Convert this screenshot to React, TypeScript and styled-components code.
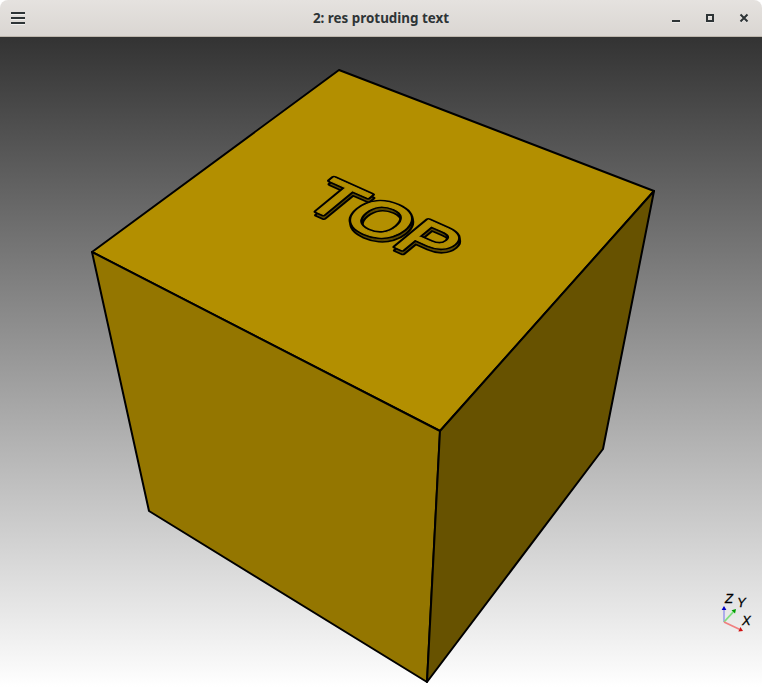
import React from 'react'

import styled, { createGlobalStyle } from 'styled-components'

const GlobalStyle = createGlobalStyle`
  html, body, #root {
    margin: 0;
    height: 100%;
    background: #ffffff;
  }
`

const Window = styled.div`
  width: 100%;
  height: 100vh;
  display: flex;
  flex-direction: column;
  overflow: hidden;
`

const TitleBar = styled.header`
  flex-shrink: 0;
  height: 36px;
  display: grid;
  grid-template-columns: 1fr auto 1fr;
  align-items: center;
  padding: 0 11px;
  background: linear-gradient(#e5e2df, #dad6d2);
  border-bottom: 1px solid #bdb6ac;
  border-radius: 8px 8px 0 0;
`

const Title = styled.h1`
  margin: 0;
  font: bold 13.4px 'Noto Sans', sans-serif;
  color: #2e3436;
`

const MenuButton = styled.div`
  display: flex;
  color: #2e3436;
  filter: drop-shadow(0 1px 0 #ffffff99);
`

const Controls = styled.div`
  display: flex;
  justify-content: flex-end;
  gap: 18px;
  color: #2e3436;
  filter: drop-shadow(0 1px 0 #ffffff66);
`

const Viewport = styled.main`
  flex-grow: 1;
  min-height: 0;
  background: linear-gradient(#333333, #ffffff);
`

const Scene = styled.svg`
  display: block;
  width: 100%;
  height: 100%;
`

const Face = styled.polygon<{ $fill: string }>`
  fill: ${(p) => p.$fill};
  stroke: #000000;
  stroke-width: 2;
  stroke-linejoin: round;
`

const Embossed = styled.text<{ $color: string; $width: number }>`
  font: 50px 'Liberation Sans', sans-serif;
  fill: ${(p) => p.$color};
  stroke: ${(p) => p.$color};
  stroke-width: ${(p) => p.$width};
  stroke-linejoin: round;
`

const AxisLabel = styled.text`
  font: italic 13px 'Liberation Sans', sans-serif;
  fill: #000000;
  stroke: #000000;
  stroke-width: 0.3;
`

const TEXT_MATRIX = 'matrix(1.32 0.59 -0.95 0.78'

function embossMatrix(dx: number, dy: number) {
  return `${TEXT_MATRIX} ${300 + dx} ${204 + dy})`
}

function TopLabel() {
  // each level of the raised text: a black outline with the face colour on top
  const levels = [
    { dx: 0.6, dy: 3.6, face: '#5f4c00' },
    { dx: 0, dy: 0, face: '#b38f00' },
  ]
  return (
    <g>
      {levels.map((level) => (
        <g key={level.dy}>
          <Embossed $color="#000000" $width={4.2} transform={embossMatrix(level.dx, level.dy)}>
            TOP
          </Embossed>
          <Embossed $color={level.face} $width={1} transform={embossMatrix(level.dx, level.dy)}>
            TOP
          </Embossed>
        </g>
      ))}
    </g>
  )
}

function Axis({ x, y, shaft, tip }: { x: number; y: number; shaft: string; tip: string }) {
  const ox = 724
  const oy = 622
  const len = Math.hypot(x - ox, y - oy)
  const ux = (x - ox) / len
  const uy = (y - oy) / len
  const bx = x - ux * 4
  const by = y - uy * 4
  return (
    <g>
      <line x1={ox} y1={oy} x2={bx} y2={by} stroke={shaft} strokeWidth={1.8} />
      <polygon
        points={`${x},${y} ${bx - uy * 2.4},${by + ux * 2.4} ${bx + uy * 2.4},${by - ux * 2.4}`}
        fill={tip}
      />
    </g>
  )
}

export default function App() {
  return (
    <Window>
      <GlobalStyle />
      <TitleBar>
        <MenuButton>
          <svg width="14" height="12" viewBox="0 0 14 12" fill="currentColor">
            <rect y="0" width="14" height="2" />
            <rect y="5" width="14" height="2" />
            <rect y="10" width="14" height="2" />
          </svg>
        </MenuButton>
        <Title>2: res protuding text</Title>
        <Controls>
          <svg width="16" height="16" viewBox="0 0 16 16" fill="currentColor">
            <rect x="5" y="10" width="8" height="2" />
          </svg>
          <svg width="16" height="16" viewBox="0 0 16 16" fill="none" stroke="currentColor" strokeWidth="2">
            <rect x="6" y="5" width="6" height="6" />
          </svg>
          <svg width="16" height="16" viewBox="0 0 16 16" fill="none" stroke="currentColor" strokeWidth="2">
            <path d="M5.5 4.5l7 7M12.5 4.5l-7 7" />
          </svg>
        </Controls>
      </TitleBar>

      <Viewport>
        <Scene viewBox="0 37 762 650">
          <Face $fill="#b38f00" points="339,70 654,191 440,431 92,252" />
          <Face $fill="#947600" points="92,252 440,431 427,682 149,511" />
          <Face $fill="#675200" points="654,191 440,431 427,682 603,449" />

          <TopLabel />

          <Axis x={724} y={606} shaft="#a6a6ea" tip="#0000c8" />
          <Axis x={736} y={609} shaft="#7fe07f" tip="#00a000" />
          <Axis x={743} y={631} shaft="#f08080" tip="#d01010" />
          <AxisLabel x={725} y={603}>Z</AxisLabel>
          <AxisLabel x={737} y={607}>Y</AxisLabel>
          <AxisLabel x={742} y={625}>X</AxisLabel>
        </Scene>
      </Viewport>
    </Window>
  )
}
